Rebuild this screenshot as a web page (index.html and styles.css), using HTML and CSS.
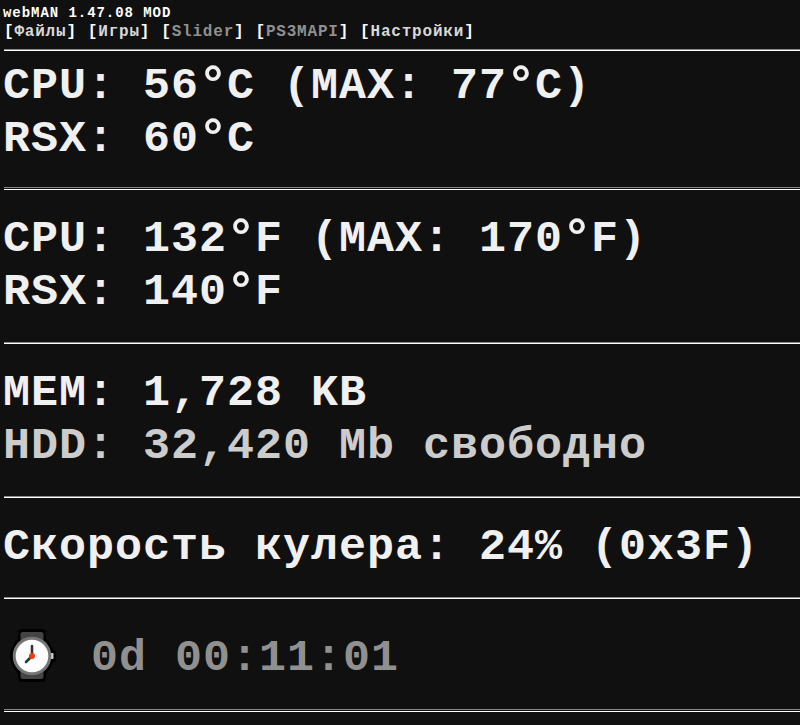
FILE: index.html
```html
<!DOCTYPE html>
<html lang="ru">
<head>
    <meta charset="UTF-8">
    <title>webMAN 1.47.08 MOD</title>
    <link rel="stylesheet" href="styles.css">
</head>
<body>
    <header class="top">
        <div class="version">webMAN 1.47.08 MOD</div>
        <nav class="menu">
            <span>[<a href="#">Файлы</a>]</span>
            <span>[<a href="#">Игры</a>]</span>
            <span>[<a href="#" class="dim">Slider</a>]</span>
            <span>[<a href="#" class="dim">PS3MAPI</a>]</span>
            <span>[<a href="#">Настройки</a>]</span>
        </nav>
    </header>
    <hr class="thin">
    <main class="info">
        <div class="temp first">
            <p>CPU: 56<span class="deg">°</span>C (MAX: 77<span class="deg">°</span>C)</p>
            <p>RSX: 60<span class="deg">°</span>C</p>
        </div>
        <hr>
        <div class="temp">
            <p>CPU: 132<span class="deg">°</span>F (MAX: 170<span class="deg">°</span>F)</p>
            <p>RSX: 140<span class="deg">°</span>F</p>
        </div>
        <hr class="thin">
        <div class="memory">
            <p>MEM: 1,728 KB</p>
            <p class="hdd">HDD: 32,420 Mb свободно</p>
        </div>
        <hr class="thin">
        <div class="fan">
            <p>Скорость кулера: 24% (0x3F)</p>
        </div>
        <hr class="thin">
        <div class="uptime">
            <svg class="watch" viewBox="0 0 48 56">
                <rect x="10" y="1" width="28" height="53" rx="4" fill="#000"/>
                <circle cx="24" cy="28" r="22" fill="#000"/>
                <rect x="40" y="22" width="8" height="12" rx="3" fill="#000"/>
                <rect x="12.5" y="4" width="23" height="47" rx="2.5" fill="#444"/>
                <rect x="42" y="25" width="3.5" height="6" rx="1" fill="#ccc"/>
                <circle cx="24" cy="28" r="19.3" fill="#767676"/>
                <circle cx="24" cy="28" r="16.3" fill="#fff"/>
                <path d="M24 28V18M24 28l-6 6" fill="none" stroke="#333" stroke-width="2.6" stroke-linecap="round"/>
                <circle cx="24" cy="28" r="3" fill="#f03a17"/>
            </svg>
            <p>0d 00:11:01</p>
        </div>
        <hr>
    </main>
</body>
</html>
```
FILE: styles.css
```css
body {
    margin: 0;
    padding: 4px 0 0 3px;
    background-color: #101010;
    color: #f0f0f0;
    font-family: "Liberation Mono", "Courier New", monospace;
    font-weight: bold;
    overflow: hidden;
}

.top {
    height: 45px;
}

.version {
    font-size: 14px;
    line-height: 18px;
    letter-spacing: 0.95px;
    color: #fff;
}

.menu {
    display: flex;
    gap: 11px;
    padding-left: 1px;
    font-size: 16px;
    line-height: 20px;
    letter-spacing: 0.8px;
    color: #fff;
}

a {
    color: #d8d8d8;
    text-decoration: none;
}

.dim {
    color: #909090;
}

hr {
    height: 1px;
    margin: -1px 0 0 1px;
    border: 0;
    border-top: 1px solid #888;
    border-bottom: 1px solid #fff;
}

.thin {
    height: 0;
    margin-top: 0;
}

.info {
    font-size: 45px;
    line-height: 53px;
    letter-spacing: 1px;
}

.info p {
    margin: 0;
    white-space: pre;
}

.deg {
    display: inline-block;
    width: 28px;
    font-size: 50px;
    line-height: 0;
    text-indent: -1px;
    vertical-align: -2px;
}

.temp,
.memory {
    height: 129px;
    padding-top: 23px;
}

.first {
    height: 128px;
    padding-top: 9px;
}

.hdd {
    color: #ccc;
}

.fan {
    height: 76px;
    padding-top: 23px;
}

.uptime {
    display: flex;
    height: 82px;
    padding: 29px 0 0 5px;
    gap: 35px;
    color: #909090;
}

.uptime p {
    padding-top: 4px;
}

.watch {
    width: 48px;
    height: 56px;
}
```
